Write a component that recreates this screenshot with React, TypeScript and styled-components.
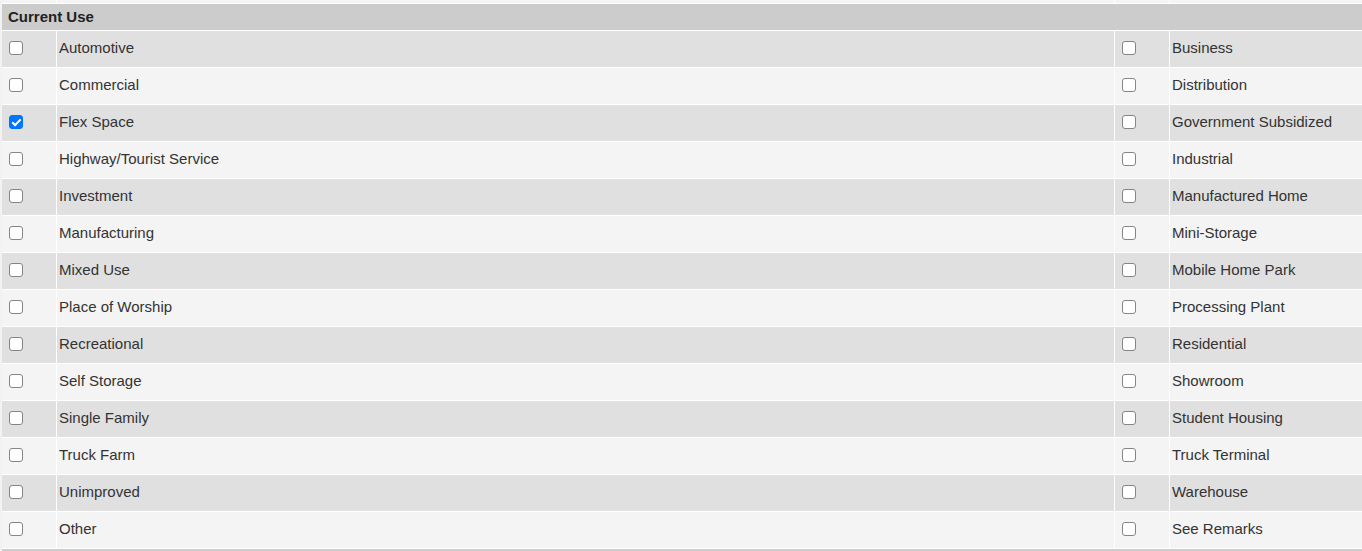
import styled, { createGlobalStyle } from "styled-components";

const GlobalStyle = createGlobalStyle`
  html, body {
    margin: 0;
    padding: 0;
    background: #ffffff;
  }
  body {
    font-family: "Liberation Sans", Arial, sans-serif;
    color: #333333;
  }
`;

interface IUseRow {
  left: string;
  right: string;
  leftChecked?: boolean;
  rightChecked?: boolean;
}

const rows: IUseRow[] = [
  { left: "Automotive", right: "Business" },
  { left: "Commercial", right: "Distribution" },
  { left: "Flex Space", right: "Government Subsidized", leftChecked: true },
  { left: "Highway/Tourist Service", right: "Industrial" },
  { left: "Investment", right: "Manufactured Home" },
  { left: "Manufacturing", right: "Mini-Storage" },
  { left: "Mixed Use", right: "Mobile Home Park" },
  { left: "Place of Worship", right: "Processing Plant" },
  { left: "Recreational", right: "Residential" },
  { left: "Self Storage", right: "Showroom" },
  { left: "Single Family", right: "Student Housing" },
  { left: "Truck Farm", right: "Truck Terminal" },
  { left: "Unimproved", right: "Warehouse" },
  { left: "Other", right: "See Remarks" },
];

export default function App() {
  return (
    <>
      <GlobalStyle />
      <Page>
        <UseGrid>
          {/* tail of the section above */}
          <StubCell />
          <StubCell />
          <StubCell />
          <StubCell />

          <SectionHeader>Current Use</SectionHeader>

          {rows.map((row, i) => {
            const dark = i % 2 === 0;
            return (
              <Row key={row.left} $dark={dark}>
                <CheckCell>
                  <Check type="checkbox" defaultChecked={row.leftChecked} />
                </CheckCell>
                <LabelCell>{row.left}</LabelCell>
                <CheckCell>
                  <Check type="checkbox" defaultChecked={row.rightChecked} />
                </CheckCell>
                <LabelCell>{row.right}</LabelCell>
              </Row>
            );
          })}

          {/* start of the next section header */}
          <NextHeader />
        </UseGrid>
      </Page>
    </>
  );
}

const Page = styled.div`
  display: flex;
  width: 1362px;
  height: 551px;
  overflow: hidden;
  background: #f2f2f2;
  padding-left: 2px;
  box-sizing: border-box;
`;

const UseGrid = styled.div`
  flex: 1;
  display: grid;
  grid-template-columns: 54px 1057px 54px 1fr;
  grid-template-rows: 3px 26px repeat(14, 36px) 2px;
  gap: 1px;
  background: #ffffff;
  align-content: start;
`;

const StubCell = styled.div`
  background: #f4f4f4;
`;

const SectionHeader = styled.div`
  grid-column: 1 / -1;
  background: #cccccc;
  display: flex;
  align-items: center;
  padding: 0 0 1px 6px;
  font-size: 15px;
  font-weight: bold;
  color: #222222;
`;

const NextHeader = styled.div`
  grid-column: 1 / -1;
  background: #cccccc;
`;

const Row = styled.div<{ $dark: boolean }>`
  display: contents;
  & > div {
    background: ${(p) => (p.$dark ? "#e0e0e0" : "#f4f4f4")};
  }
`;

const CheckCell = styled.div`
  display: flex;
  align-items: center;
  padding: 0 0 2px 3px;
`;

const Check = styled.input`
  appearance: none;
  box-sizing: border-box;
  width: 14px;
  height: 14px;
  margin: 0 0 0 4px;
  border: 1px solid #858585;
  border-radius: 3px;
  background: #ffffff;
  display: grid;
  place-items: center;

  &:checked {
    border-color: #0075ff;
    background: #0075ff;
  }
  &:checked::after {
    content: "";
    width: 3px;
    height: 7px;
    margin-top: -2px;
    border: solid #ffffff;
    border-width: 0 2px 2px 0;
    transform: rotate(45deg);
  }
`;

const LabelCell = styled.div`
  display: flex;
  align-items: center;
  padding: 0 0 4px 2px;
  font-size: 15px;
  color: #333333;
  white-space: nowrap;
`;
